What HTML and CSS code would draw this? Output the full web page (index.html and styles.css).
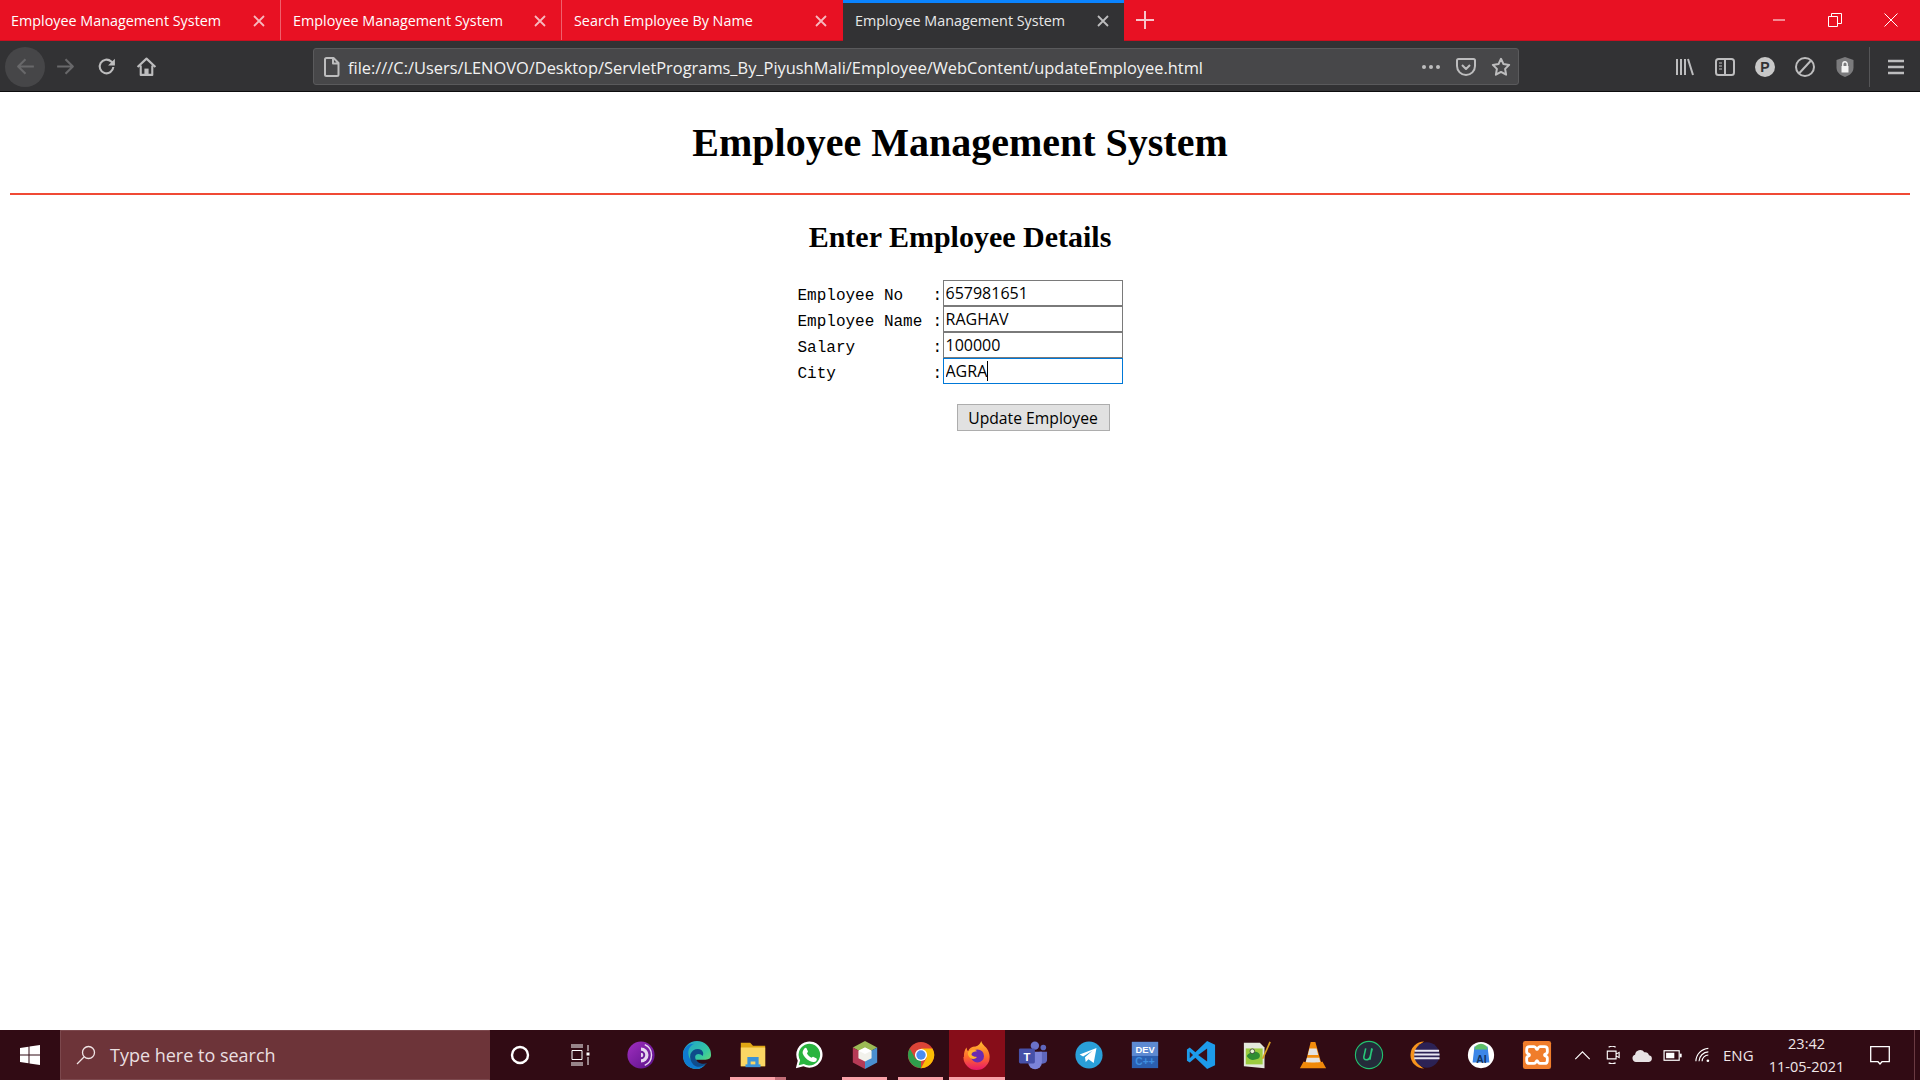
FILE: index.html
```html
<!DOCTYPE html>
<html lang="en">
<head>
<meta charset="utf-8">
<title>Employee Management System</title>
<link rel="stylesheet" href="styles.css">
</head>
<body>
<div class="tabbar">
  <div class="tab"><span class="tab-title">Employee Management System</span><svg class="tab-x" viewBox="0 0 12 12"><path d="M1 1l10 10M11 1L1 11"/></svg></div>
  <div class="tab"><span class="tab-title">Employee Management System</span><svg class="tab-x" viewBox="0 0 12 12"><path d="M1 1l10 10M11 1L1 11"/></svg></div>
  <div class="tab"><span class="tab-title">Search Employee By Name</span><svg class="tab-x" viewBox="0 0 12 12"><path d="M1 1l10 10M11 1L1 11"/></svg></div>
  <div class="tab tab-active"><span class="tab-title">Employee Management System</span><svg class="tab-x" viewBox="0 0 12 12"><path d="M1 1l10 10M11 1L1 11"/></svg></div>
  <svg class="tab-plus" viewBox="0 0 18 18"><path d="M9 0v18M0 9h18"/></svg>
  <div class="win-controls">
    <svg class="win-btn" viewBox="0 0 14 14"><path d="M1 7h12"/></svg>
    <svg class="win-btn" viewBox="0 0 14 14"><path d="M.5 3.500h9v10h-9zM3.500 3.500v-3h10v10h-4"/></svg>
    <svg class="win-btn" viewBox="0 0 14 14"><path d="M.5.5l13 13M13.500.5l-13 13"/></svg>
  </div>
</div>

<div class="navbar">
  <div class="nav-left">
    <div class="nav-btn nav-back"><svg class="ic dim" viewBox="0 0 20 20"><path d="M18 10H3M10 3l-7 7 7 7"/></svg></div>
    <div class="nav-btn"><svg class="ic dim" viewBox="0 0 20 20"><path d="M2 10h15M10 3l7 7-7 7"/></svg></div>
    <div class="nav-btn nav-reload"><svg class="ic" viewBox="0 0 20 20"><path d="M16.500 10.500a6.500 6.500 0 1 1-2-5.200L17 8"/><path class="fill" d="M18 2.500V9h-6.500z"/></svg></div>
    <div class="nav-btn"><svg class="ic" viewBox="0 0 20 20"><path d="M1.500 10.500L10 2.500l8.500 8M4.500 9v9h11V9"/><path class="fill" d="M8 12h4v6H8z"/></svg></div>
  </div>
  <div class="urlbar">
    <svg class="ic doc" viewBox="0 0 16 20"><path d="M2.500 1h7l5 5v11.500a1.500 1.500 0 0 1-1.500 1.500H2.500A1.500 1.500 0 0 1 1 17.500v-15A1.500 1.500 0 0 1 2.500 1zM9 1v5.500h5.500"/></svg>
    <span class="url">file:///C:/Users/LENOVO/Desktop/ServletPrograms_By_PiyushMali/Employee/WebContent/updateEmployee.html</span>
    <svg class="ic url-ic dots" viewBox="0 0 20 20"><circle class="fill" cx="3" cy="10" r="2"/><circle class="fill" cx="10" cy="10" r="2"/><circle class="fill" cx="17" cy="10" r="2"/></svg>
    <svg class="ic url-ic" viewBox="0 0 20 20"><path d="M2.500 2h15A1.500 1.500 0 0 1 19 3.500V9a9 9 0 0 1-18 0V3.500A1.500 1.500 0 0 1 2.500 2zM6 8l4 4 4-4"/></svg>
    <svg class="ic url-ic" viewBox="0 0 20 20"><path d="M10 1.800l2.500 5.300 5.700.8-4.100 4 1 5.800-5.100-2.800-5.100 2.800 1-5.800-4.100-4 5.700-.8z"/></svg>
  </div>
  <div class="nav-right">
    <svg class="ic tool" viewBox="0 0 20 20"><path d="M2 2v16M6 2v16M10 2v16M13 2l5 16"/></svg>
    <svg class="ic tool" viewBox="0 0 20 20"><rect x="1" y="2" width="18" height="16" rx="2.500"/><path d="M10 2v16"/><path class="thin" d="M4 6h3M4 9h3M4 12h3"/></svg>
    <svg class="tool" viewBox="0 0 20 20"><circle cx="10" cy="10" r="10" fill="#c8c8c8"/><text class="p-mark" x="10" y="15">P</text></svg>
    <svg class="ic tool" viewBox="0 0 20 20"><circle cx="10" cy="10" r="9"/><path d="M16 3.500L4 16.500"/></svg>
    <svg class="tool" viewBox="0 0 20 20"><path d="M10 0l8.500 3v7.500c0 5-4 8-8.500 9.500C5.500 18.500 1.500 15.500 1.500 10.500V3z" fill="#7b7b7d"/><path d="M6.500 9h7v6.500h-7z" fill="#f4f4f4"/><path d="M7.800 9V7a2.200 2.200 0 0 1 4.400 0v2" fill="none" stroke="#f4f4f4" stroke-width="1.400"/></svg>
    <div class="tool-sep"></div>
    <svg class="ic tool" viewBox="0 0 20 20"><path class="thick" d="M2 4h16M2 10h16M2 16h16"/></svg>
  </div>
</div>

<main class="page">
  <h1 class="title">Employee Management System</h1>
  <hr class="rule">
  <h2 class="subtitle">Enter Employee Details</h2>
  <form class="emp-form">
    <label class="lbl">Employee No</label><span class="colon">:</span><input class="field" type="text" value="657981651">
    <label class="lbl">Employee Name</label><span class="colon">:</span><input class="field" type="text" value="RAGHAV">
    <label class="lbl">Salary</label><span class="colon">:</span><input class="field" type="text" value="100000">
    <label class="lbl">City</label><span class="colon">:</span><div class="field-wrap"><input class="field field-focus" type="text" value="AGRA"><span class="caret"></span></div>
    <button class="submit" type="button">Update Employee</button>
  </form>
</main>

<div class="taskbar">
  <div class="start"><svg class="start-ic" viewBox="0 0 20 20"><path d="M0 3l8.500-1.200v7.700H0zM9.500 1.600L20 0v9.500H9.500zM0 10.500h8.500v7.700L0 17zM9.500 10.500H20V20L9.500 18.400z" fill="#fff"/></svg></div>
  <div class="search">
    <svg class="search-ic" viewBox="0 0 20 20"><circle cx="12.500" cy="7.500" r="6"/><path d="M8 12l-7 7"/></svg>
    <span class="search-text">Type here to search</span>
  </div>
  <div class="tb-sys"><svg class="cortana" viewBox="0 0 20 20"><circle cx="10" cy="10" r="8"/></svg></div>
  <div class="tb-sys"><svg class="taskview" viewBox="0 0 20 22"><path d="M1 1h12M1 3h12M2 6.500h10v9H2zM1 19h12M1 21h12M18 1v6M18 13v8"/><rect x="16.500" y="8.500" width="3" height="3" fill="#fff" stroke="none"/></svg></div>

  <div class="apps">
    <div class="app"><svg class="app-ic" viewBox="0 0 32 32"><defs><linearGradient id="tor" x1="0" y1="0" x2="1" y2="1"><stop offset="0" stop-color="#a02fc0"/><stop offset="1" stop-color="#5a1088"/></linearGradient></defs><circle cx="16" cy="16" r="14.500" fill="url(#tor)"/><path d="M16 8a8 8 0 0 1 0 16z" fill="#e6d5ee"/><path d="M16 11.500a4.500 4.500 0 0 1 0 9z" fill="#6c1a99"/><path d="M16 13.500a2.500 2.500 0 0 1 0 5z" fill="#e6d5ee"/><path d="M20 5a12 12 0 0 1 0 22" fill="none" stroke="#e6d5ee" stroke-width="1.500"/></svg></div>
    <div class="app"><svg class="app-ic" viewBox="0 0 32 32"><defs><linearGradient id="edge" x1="0" y1="0" x2="1" y2="1"><stop offset="0" stop-color="#1f9fd0"/><stop offset=".6" stop-color="#35c8a0"/><stop offset="1" stop-color="#86e05a"/></linearGradient></defs><path d="M1 16A15 15 0 0 1 31 16c0 3-2 5-6 5H15c0 3 4 6 10 4.500C22 29 19 31 16 31 7 31 1 25 1 16z" fill="url(#edge)"/><path d="M1 16C1 9 6 4 13 4 8 6 6 11 7 16c1 7 9 13 18 10-3 3-6 5-9 5C7 31 1 25 1 16z" fill="#0f7bd0"/><path d="M9 15c2-5 8-7 12-4 2 2 2 4 1 6-2-3-8-3-8 1 0 5 7 9 13 6.500C22 29 16 30 12 26c-3-3-4-7-3-11z" fill="#0f4c8a"/></svg></div>
    <div class="app app-open app-multi"><svg class="app-ic" viewBox="0 0 32 32"><path d="M3 3h10l3 3h13v22H3z" fill="#e0a614"/><path d="M3 8h26v20H3z" fill="#fbd664"/><path d="M10 18h12v10h-3.500v-5h-5v5H10z" fill="#3b93d8"/><rect x="8" y="26" width="16" height="3" fill="#3b93d8"/></svg></div>
    <div class="app"><svg class="app-ic" viewBox="0 0 32 32"><path d="M2 30l2-8A14 14 0 1 1 10 28z" fill="#fff"/><path d="M5 27l1.500-5.500A11.500 11.500 0 1 1 10.500 25.500z" fill="#29b43f"/><path d="M11 9c1-1 2-1 2.500 0l1.300 3c.2.500 0 1-1 2 1 2 3 4 5 5 1-1 1.500-1.200 2-1l3 1.500c.8.400.7 1.500 0 2.500-1.500 2-4 2-7 .5-4-2-6.500-5-7.500-8-.5-2 .5-4 1.700-5.500z" fill="#fff"/></svg></div>
    <div class="app app-open"><svg class="app-ic" viewBox="0 0 32 32"><path d="M16 1L29 8 16 15 3 8z" fill="#9cba55"/><path d="M3 8l13 7v16L3 24z" fill="#b53a56"/><path d="M29 8L16 15v16l13-7z" fill="#4a8fd0"/><path d="M16 8l7 3.500v8L16 23l-7-3.500v-8z" fill="#f2f2ec"/><path d="M9 11.500L16 15l7-3.500L16 8z" fill="#fff"/></svg></div>
    <div class="app app-open"><svg class="app-ic" viewBox="0 0 32 32"><circle cx="16" cy="16" r="14" fill="#db4437"/><path d="M16 30A14 14 0 0 1 4 9l6 11 6 2z" fill="#2f9e4c"/><path d="M22 19L16 30a14 14 0 0 0 12.200-21H16z" fill="#fbbc05"/><circle cx="16" cy="16" r="6.500" fill="#fff"/><circle cx="16" cy="16" r="5" fill="#4a8cf0"/></svg></div>
    <div class="app app-open app-hot"><svg class="app-ic" viewBox="0 0 32 32"><defs><linearGradient id="ff" x1="0" y1="0" x2="0" y2="1"><stop offset="0" stop-color="#ffc02e"/><stop offset=".55" stop-color="#ff6a2c"/><stop offset="1" stop-color="#e8176b"/></linearGradient></defs><path d="M2 18c0-5 1-8 3-10 0 2 .5 3 1.500 4 1-3 4-5 8-5 3-1 5-3 6-6 1 4 4 5 6 8 2 3 3 6 3 9a14 14 0 0 1-28 0z" fill="url(#ff)"/><circle cx="16.500" cy="17" r="7" fill="#6a2bb0"/><path d="M7 12c3-2 7-2 9 0-3 0-5 1-6 3 0 2 3 3 6 3-2 3-7 3-9-1-1-2-1-3 0-5z" fill="#ffb02e"/></svg></div>
    <div class="app"><svg class="app-ic" viewBox="0 0 32 32"><circle cx="18" cy="6" r="4.500" fill="#6b72c8"/><circle cx="27" cy="8" r="3" fill="#5f67bd"/><path d="M23 12.500h8v8a4.500 4.500 0 0 1-8 3z" fill="#5f67bd"/><path d="M11 12.500h14.500V24a7 7 0 0 1-14.500 0z" fill="#7b83d8"/><rect x="1" y="9" width="17" height="16" rx="1.500" fill="#4650a8"/><text class="teams-t" x="9.500" y="22">T</text></svg></div>
    <div class="app"><svg class="app-ic" viewBox="0 0 32 32"><circle cx="16" cy="16" r="14.500" fill="#2a9fd8"/><path d="M6 15.500l18-7-3 16-5.500-4-3 3-.8-5 8-7-10 6z" fill="#fff"/></svg></div>
    <div class="app"><svg class="app-ic" viewBox="0 0 32 32"><rect x="2" y="2" width="28" height="28" fill="#2b5fb0"/><rect x="2" y="2" width="28" height="15" fill="#5d8ad2"/><text class="dev-t" x="16" y="13.500">DEV</text><text class="cpp-t" x="16" y="26.500">C++</text></svg></div>
    <div class="app"><svg class="app-ic" viewBox="0 0 32 32"><path d="M22.500 1L31 5v22l-8.500 4L10 19l-6 5-3-2v-12l3-2 6 5z" fill="#1d9bea"/><path d="M22.500 9v14L13 16z" fill="#3a1019"/><path d="M4 12.500L7.500 16 4 19.500z" fill="#3a1019"/></svg></div>
    <div class="app"><svg class="app-ic" viewBox="0 0 32 32"><path d="M2 3h17l5 5v22L2 28z" fill="#e4e8dc"/><path d="M4 9h18v17H4z" fill="#9ccc3f"/><path d="M5 17c2-4 9-6 13-3 2 2 1 5-1 6-5 2-9 2-12-3z" fill="#2f8d32"/><circle cx="11" cy="12" r="2.500" fill="#e8f4d8" stroke="#333" stroke-width=".8"/><path d="M22 20L30 2" stroke="#d8a020" stroke-width="1.800"/></svg></div>
    <div class="app"><svg class="app-ic" viewBox="0 0 32 32"><path d="M13.500 2h5l7 25h-18z" fill="#f28c0c"/><path d="M12.200 9h7.600l1.700 7h-11z" fill="#e3e3e3"/><path d="M16 19l6.500 0 1.500 5H8l1.500-5z" fill="#e3e3e3"/><path d="M6 23c2 2 18 2 20 0l4 7H2z" fill="#f0890a"/></svg></div>
    <div class="app"><svg class="app-ic" viewBox="0 0 32 32"><circle cx="16" cy="16" r="14.500" fill="#242b3a" stroke="#22c26f" stroke-width="1.200"/><path d="M12.500 9l-2 9c-.7 4 5 4 6.500.5L19.500 9M19 9l-2 12" fill="none" stroke="#28c878" stroke-width="1.700"/></svg></div>
    <div class="app"><svg class="app-ic" viewBox="0 0 32 32"><path d="M15 1.500a14.500 14.500 0 0 0 0 29c-5-3-8-8-8-14.500S10 4.500 15 1.500z" fill="#f7941e"/><circle cx="18" cy="16" r="13.500" fill="#2c2255"/><path d="M5 10.500h26v2H5zM4.500 14.500h27v2h-27zM4.500 18.500h27v2h-27z" fill="#e9e7f2"/></svg></div>
    <div class="app"><svg class="app-ic" viewBox="0 0 32 32"><circle cx="16" cy="16" r="14" fill="#fff"/><path d="M9 7h14l2 17H7z" fill="#3c86e8"/><path d="M9 10a7 6 0 0 1 14 0z" fill="#5fc06a"/><text class="ai-t" x="16.500" y="24">AI</text></svg></div>
    <div class="app"><svg class="app-ic" viewBox="0 0 32 32"><rect x="1" y="1" width="30" height="30" rx="2.500" fill="#f07d2b"/><path d="M8 7h5c2 0 2 3 3 3s1-3 3-3h5c2 0 3 1 3 3v3c0 2-3 1.500-3 3s3 1 3 3v3c0 2-1 3-3 3h-5c-2 0-2-3-3-3s-1 3-3 3H8c-2 0-3-1-3-3v-3c0-2 3-1.500 3-3S5 15 5 13v-3c0-2 1-3 3-3z" fill="#f07d2b" stroke="#fff" stroke-width="3" stroke-linejoin="round"/></svg></div>
  </div>

  <div class="tray">
    <svg class="tray-ic chev" viewBox="0 0 18 10"><path d="M1 9l8-8 8 8"/></svg>
    <svg class="tray-ic video" viewBox="0 0 16 20"><path d="M3 1a9 9 0 0 1 8 0M3 19a9 9 0 0 0 8 0M1.500 5.500h10v9h-10zM11.500 9l3.500-2v6l-3.500-2"/></svg>
    <svg class="tray-ic cloud" viewBox="0 0 22 14"><path d="M4 14a4 4 0 0 1-1-7.800A5.500 5.500 0 0 1 13 3.500a4.500 4.500 0 0 1 5 3.200A3.700 3.700 0 0 1 18 14z" fill="#e8e2e4" stroke="none"/></svg>
    <svg class="tray-ic battery" viewBox="0 0 20 12"><rect x=".8" y=".8" width="16.500" height="10.400"/><rect x="3" y="3" width="9" height="6" fill="#fff" stroke="none"/><rect x="18" y="4" width="2" height="4" fill="#fff" stroke="none"/></svg>
    <svg class="tray-ic wifi" viewBox="0 0 18 18"><path d="M1 16A15 15 0 0 1 15 1.500M4.500 16A11 11 0 0 1 15 5.500M8 16a7 7 0 0 1 7-7"/><circle cx="14.500" cy="15.500" r="1.500" fill="#fff" stroke="none"/></svg>
    <span class="lang">ENG</span>
    <div class="clock"><span>23:42</span><span>11-05-2021</span></div>
    <svg class="tray-ic notif" viewBox="0 0 20 19"><path d="M.7.700h18.600v15h-7.300L10 18l-2-2.300H.7z"/></svg>
    <div class="show-desktop"></div>
  </div>
</div>
</body>
</html>
```

FILE: styles.css
```css
* { box-sizing: border-box; }
html, body { margin: 0; height: 100%; }
body {
  display: flex;
  flex-direction: column;
  height: 100vh;
  overflow: hidden;
  background: #fff;
  font-family: "Liberation Serif", serif;
}

/* tab strip */
.tabbar {
  display: flex;
  align-items: stretch;
  flex: 0 0 41px;
  background: #e81123;
  border-bottom: 1px solid #c90f20;
  color: #fff;
  font-family: "Open Sans", sans-serif;
}
.tab {
  display: flex;
  align-items: center;
  justify-content: space-between;
  flex: 0 0 281px;
  padding: 1px 15px 0 12px;
  border-right: 1px solid #f0606c;
}
.tab:first-child { padding-left: 11px; }
.tab:nth-child(3) { border-right-color: #e81123; }
.tab-title { font-size: 14.350px; white-space: nowrap; }
.tab-x { width: 12px; height: 12px; fill: none; stroke: #f7b8be; stroke-width: 1.800; }
.tab-active {
  background: #323234;
  border-top: 3px solid #0a84ff;
  border-right: 0;
  margin-bottom: -1px;
  padding-top: 0;
  padding-bottom: 3px;
  color: #e8e8e8;
}
.tab-active .tab-x { stroke: #bdbdbe; }
.tab-plus {
  width: 18px;
  height: 18px;
  align-self: center;
  margin-left: 12px;
  fill: none;
  stroke: #f8c4c9;
  stroke-width: 2;
}
.win-controls { display: flex; align-items: center; gap: 42px; margin-left: auto; padding-right: 22px; }
.win-btn { width: 14px; height: 14px; fill: none; stroke: #fff; stroke-width: 1; }

/* toolbar */
.navbar {
  display: flex;
  align-items: center;
  flex: 0 0 51px;
  padding-top: 1px;
  background: #323234;
  border-bottom: 1px solid #0c0c0d;
}
.ic { fill: none; stroke: #bdbdbe; stroke-width: 2; stroke-linejoin: round; }
.ic .fill, .ic.dots .fill { fill: #bdbdbe; stroke: none; }
.dim { stroke: #68686a; }
.nav-left { display: flex; align-items: center; padding-left: 5px; flex: 0 0 313px; }
.nav-btn { display: flex; align-items: center; justify-content: center; width: 40px; height: 40px; border-radius: 50%; }
.nav-back { background: #464648; }
.nav-reload { margin-left: 1px; }
.nav-btn .ic { width: 21px; height: 21px; }
.urlbar {
  display: flex;
  align-items: center;
  flex: 0 0 1206px;
  height: 37px;
  padding: 0 7px 0 10px;
  background: #474749;
  border: 1px solid #5a5a5c;
  border-radius: 3px;
  color: #f2f2f2;
}
.doc { width: 16px; height: 20px; flex: none; }
.url { margin-left: 8px; padding-top: 1px; font-family: "Open Sans", sans-serif; font-size: 16.400px; white-space: nowrap; flex: 1; }
.url-ic { width: 20px; height: 20px; margin-left: 15px; flex: none; }
.nav-right { display: flex; align-items: center; justify-content: flex-end; flex: 1; gap: 20px; padding-right: 14px; }
.tool { width: 20px; height: 20px; flex: none; }
.tool-sep { width: 1px; height: 40px; background: #555557; margin: 0 -4px 0 -6px; }
.thick { stroke-width: 2.600; }
.thin { stroke-width: 1.200; }
.p-mark { font-family: "Liberation Sans", sans-serif; font-size: 14px; font-weight: 700; text-anchor: middle; fill: #323234; }

/* page content */
.page { flex: 1; min-height: 0; padding: 28px 10px 0; }
.title { margin: 0; font-size: 40px; line-height: 46px; text-align: center; color: #000; }
.rule { margin: 27px 0 0; height: 2px; border: 0; background: #f04a35; }
.subtitle { margin: 24px 0 0; font-size: 30px; line-height: 35px; text-align: center; color: #000; }
.emp-form {
  display: grid;
  grid-template-columns: max-content max-content 180px;
  grid-auto-rows: 26px;
  justify-content: center;
  align-items: center;
  margin-top: 26px;
  font-family: "Liberation Mono", monospace;
  font-size: 16px;
  color: #000;
}
.lbl { width: 135px; padding-top: 5px; }
.colon { width: 10px; padding-top: 5px; }
.field {
  display: block;
  width: 180px;
  height: 26px;
  margin: 0;
  padding: 0 2px;
  background: #fff;
  border: 1px solid #7a7a7a;
  border-radius: 0;
  outline: 0;
  font-family: "Open Sans", sans-serif;
  font-size: 16px;
  color: #000;
}
.field-wrap { position: relative; height: 26px; }
.field-focus { border-color: #0078d7; }
.caret { position: absolute; left: 44px; top: 3px; width: 1px; height: 20px; background: #000; }
.submit {
  grid-column: 3;
  justify-self: start;
  width: 153px;
  height: 27px;
  margin: 20px 0 0 14px;
  padding: 0;
  align-self: start;
  background: #e1e1e1;
  border: 1px solid #adadad;
  border-radius: 0;
  font-family: "Open Sans", sans-serif;
  font-size: 15.700px;
  color: #000;
}

/* taskbar */
.taskbar {
  display: flex;
  align-items: stretch;
  flex: 0 0 50px;
  background: #310b14;
  color: #fff;
  font-family: "Open Sans", sans-serif;
}
.start { display: flex; align-items: center; justify-content: center; flex: 0 0 60px; }
.start-ic { width: 20px; height: 20px; }
.search {
  display: flex;
  align-items: center;
  flex: 0 0 430px;
  padding-left: 15px;
  background: #6d3439;
  border: 1px solid #7c484d;
  border-right-color: #6d3439;
}
.search-ic { width: 20px; height: 20px; fill: none; stroke: #f0e4e5; stroke-width: 1.300; }
.search-text { margin-left: 14px; font-size: 18px; color: #eadfe0; }
.tb-sys { display: flex; align-items: center; justify-content: center; flex: 0 0 60px; }
.cortana { width: 20px; height: 20px; fill: none; stroke: #fff; stroke-width: 2.400; }
.taskview { width: 20px; height: 22px; fill: none; stroke: #fff; stroke-width: 1; }
.apps { display: flex; margin-left: 3px; }
.app { position: relative; display: flex; align-items: center; justify-content: center; width: 56px; }
.app-ic { width: 30px; height: 30px; }
.app-open::after { content: ""; position: absolute; left: 5px; right: 6px; bottom: 0; height: 3px; background: #f9a1a8; }
.app-multi::before { content: ""; position: absolute; left: 50px; width: 11px; bottom: 0; height: 3px; background: #c26d77; }
.app-hot { background: #870d19; }
.app-hot::after { left: 0; right: 0; }
.dev-t { font-family: "Liberation Sans", sans-serif; font-size: 10px; font-weight: 700; text-anchor: middle; fill: #fff; }
.cpp-t { font-family: "Liberation Sans", sans-serif; font-size: 11px; font-weight: 700; text-anchor: middle; fill: #3f8fe0; }
.ai-t { font-family: "Liberation Sans", sans-serif; font-size: 11px; font-weight: 700; text-anchor: middle; fill: #12335f; }
.teams-t { font-family: "Liberation Sans", sans-serif; font-size: 12px; font-weight: 700; text-anchor: middle; fill: #fff; }

.tray { position: relative; flex: 1; display: flex; align-items: center; }
.tray-ic { flex: none; fill: none; stroke: #fff; stroke-width: 1.300; }
.chev { width: 17px; height: 9px; margin-left: 9px; }
.video { width: 14px; height: 18px; margin-left: 15px; }
.cloud { width: 21px; height: 13px; margin-left: 12px; }
.battery { width: 19px; height: 11px; margin-left: 10px; }
.wifi { width: 16px; height: 16px; margin-left: 13px; }
.lang { margin-left: 12px; font-size: 15px; color: #f0e6e8; }
.clock { display: flex; flex-direction: column; align-items: center; width: 82px; margin-left: 12px; font-size: 14.500px; line-height: 23px; color: #f0e6e8; }
.notif { width: 20px; height: 19px; margin-left: 22px; }
.show-desktop { position: absolute; right: 5px; top: 0; bottom: 0; width: 1px; background: #6a3a42; }
```
